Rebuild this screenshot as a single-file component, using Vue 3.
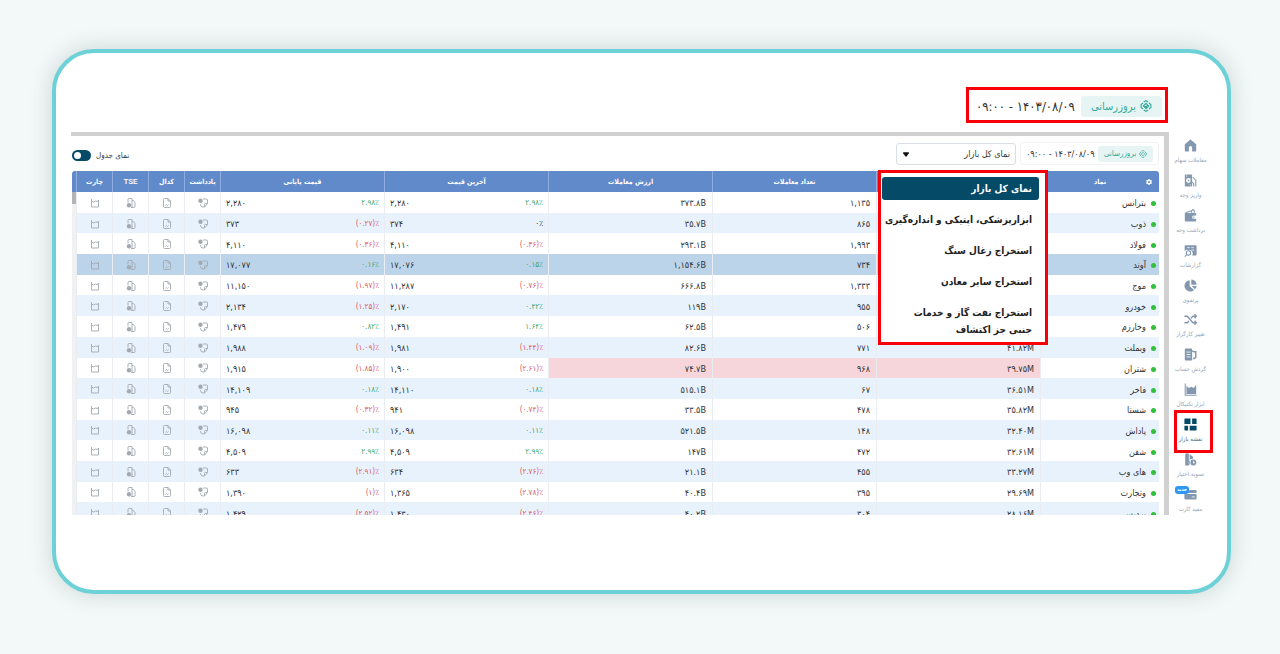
<script setup>
import { ref } from 'vue'

const tableView = ref(true)
const market = ref('نمای کل بازار')
const markets = [
  'نمای کل بازار',
  'ابزارپزشکی، اپتیکی و اندازه‌گیری',
  'استخراج زغال سنگ',
  'استخراج سایر معادن',
  'استخراج نفت گاز و خدمات\nجنبی جز اکتشاف',
]

const menu = [
  { icon: 'home', label: 'معاملات سهام' },
  { icon: 'deposit', label: 'واریز وجه' },
  { icon: 'wallet', label: 'برداشت وجه' },
  { icon: 'report', label: 'گزارشات' },
  { icon: 'pie', label: 'پرتفوی' },
  { icon: 'shuffle', label: 'تغییر کارگزار' },
  { icon: 'ledger', label: 'گردش حساب' },
  { icon: 'chart', label: 'ابزار تکنیکال' },
  { icon: 'grid', label: 'نقشه بازار', active: true },
  { icon: 'option', label: 'تسویه اختیار' },
  { icon: 'card', label: 'مفید کارت', badge: 'جدید' },
]

const rows = [
  ['بترانس', '', '۱,۱۳۵', '۳۷۳.۸B', '۲,۲۸۰', '۲.۹۸٪', '۲,۲۸۰', '۲.۹۸٪'],
  ['ذوب', '', '۸۶۵', '۳۵.۷B', '۳۷۴', '۰٪', '۳۷۳', '(۰.۲۷)٪'],
  ['فولاد', '', '۱,۹۹۳', '۲۹۳.۱B', '۴,۱۱۰', '(۰.۳۶)٪', '۴,۱۱۰', '(۰.۳۶)٪'],
  ['آوند', '', '۷۳۴', '۱,۱۵۴.۶B', '۱۷,۰۷۶', '۰.۱۵٪', '۱۷,۰۷۷', '۰.۱۶٪'],
  ['موج', '', '۱,۳۳۳', '۶۶۶.۸B', '۱۱,۲۸۷', '(۰.۷۶)٪', '۱۱,۱۵۰', '(۱.۹۷)٪'],
  ['خودرو', '', '۹۵۵', '۱۱۹B', '۲,۱۷۰', '۰.۴۲٪', '۲,۱۳۴', '(۱.۲۵)٪'],
  ['وخارزم', '', '۵۰۶', '۶۲.۵B', '۱,۴۹۱', '۱.۶۴٪', '۱,۴۷۹', '۰.۸۲٪'],
  ['وبملت', '۴۱.۸۲M', '۷۷۱', '۸۲.۶B', '۱,۹۸۱', '(۱.۴۴)٪', '۱,۹۸۸', '(۱.۰۹)٪'],
  ['شتران', '۳۹.۷۵M', '۹۶۸', '۷۴.۷B', '۱,۹۰۰', '(۲.۶۱)٪', '۱,۹۱۵', '(۱.۸۵)٪'],
  ['فاخر', '۳۶.۵۱M', '۶۷', '۵۱۵.۱B', '۱۴,۱۱۰', '۰.۱۸٪', '۱۴,۱۰۹', '۰.۱۸٪'],
  ['شستا', '۳۵.۸۲M', '۴۷۸', '۳۳.۵B', '۹۴۱', '(۰.۷۴)٪', '۹۴۵', '(۰.۳۲)٪'],
  ['پاداش', '۳۲.۴۰M', '۱۴۸', '۵۲۱.۵B', '۱۶,۰۹۸', '۰.۱۱٪', '۱۶,۰۹۸', '۰.۱۱٪'],
  ['شفن', '۳۲.۶۱M', '۴۷۲', '۱۴۷B', '۴,۵۰۹', '۲.۹۹٪', '۴,۵۰۹', '۲.۹۹٪'],
  ['های وب', '۳۳.۲۷M', '۴۵۵', '۲۱.۱B', '۶۳۴', '(۲.۷۶)٪', '۶۳۳', '(۲.۹۱)٪'],
  ['وتجارت', '۲۹.۶۹M', '۳۹۵', '۴۰.۴B', '۱,۳۶۵', '(۲.۷۸)٪', '۱,۳۹۰', '(۱)٪'],
  ['پردیس', '۲۸.۱۶M', '۳۰۴', '۴۰.۲B', '۱,۴۳۰', '(۲.۴۶)٪', '۱,۴۲۹', '(۲.۵۲)٪'],
]

const trend = (pct) => (pct.startsWith('(') ? 'down' : pct === '۰٪' ? 'flat' : 'up')
</script>

<template>
  <main class="page" dir="rtl">
    <section class="card">
      <header class="callout">
        <button class="refresh" type="button">
          <svg viewBox="0 0 16 16" aria-hidden="true">
            <path d="M5 2.6 8 1l3 1.6M11 13.4 8 15l-3-1.6M4 4 1.500 6v4L4 12M12 4l2.500 2v4L12 12M4.500 8 8 4.500 11.500 8 8 11.500zM6.500 8 8 9.500 10 7" />
          </svg>
          بروزرسانی
        </button>
        <time>۱۴۰۳/۰۸/۰۹ - ۰۹:۰۰</time>
      </header>

      <div class="body">
        <nav class="side">
          <a v-for="m in menu" :key="m.icon" href="#" :class="['item', { active: m.active }]">
            <svg viewBox="0 0 16 16" aria-hidden="true">
              <path v-if="m.icon === 'home'" d="M8 .5 1 6.500V14.500a1 1 0 0 0 1 1H6v-5a2 2 0 0 1 4 0v5h4a1 1 0 0 0 1-1v-8z" />
              <g v-else-if="m.icon === 'deposit'">
                <path fill-rule="evenodd" d="M2 .5h7a1 1 0 0 1 1 1v13a1 1 0 0 1-1 1H2a1 1 0 0 1-1-1v-13a1 1 0 0 1 1-1zm3.500 4.500a3 3 0 1 0 0 6 3 3 0 0 0 0-6z" />
                <path class="line" d="M4.500 7l2 2M11 4l3.500 4v7.500M8 8l4 4v3.500" />
                <path class="cut" d="M2.500 2.500h1.500M7 13.500h1.500" />
              </g>
              <g v-else-if="m.icon === 'wallet'">
                <path fill-rule="evenodd" d="M2 5h12a1 1 0 0 1 1 1v2h-3a2 2 0 0 0 0 4h3v2.500a1 1 0 0 1-1 1H2a1 1 0 0 1-1-1V5zM12 9.200a.8.8 0 1 0 0 1.600.8.8 0 0 0 0-1.600z" />
                <path class="line" d="M2 4.500 8 2.500l2 2M9 2.500l2-2 2 2-1 2" />
              </g>
              <g v-else-if="m.icon === 'report'">
                <path d="M2 1.500h12.500a1 1 0 0 1 1 1V13a1 1 0 0 1-1 1H10a4.200 4.200 0 0 0-4.500-6.500A4 4 0 0 0 .8 9V2.500a1 1 0 0 1 1-1z" />
                <path class="line" d="M3.500 13l-2.500 2.500" />
                <circle class="line" cx="5.500" cy="11" r="2.700" />
                <path class="cut" d="M4 4.500h3M9 4.500h3M9 7.500h3.500" />
              </g>
              <g v-else-if="m.icon === 'pie'">
                <path d="M7 1.500v7.500l5.500 4.500A7 7 0 1 1 7 1.500z" />
                <path d="M9 .5A7 7 0 0 1 15.500 7H9zM9.500 8.500h6a7 7 0 0 1-2 4z" />
              </g>
              <path v-else-if="m.icon === 'shuffle'" class="thick" d="M.5 4h3.500l7 8h4M.5 12h3.500l2-2.300M8.500 6.500 11 4h4M13 1.500 15.200 4 13 6.500M13 9.500l2.200 2.500L13 14.500" />
              <g v-else-if="m.icon === 'ledger'">
                <path d="M2 .5h7a1 1 0 0 1 1 1v13a1 1 0 0 1-1 1H2a1 1 0 0 1-1-1v-13a1 1 0 0 1 1-1z" />
                <path class="thick" d="M10 3.500l2 1h2.500v7l-2 1.500H11" />
                <path class="cut" d="M3 5h5M3 8h5M3 11h5" />
              </g>
              <g v-else-if="m.icon === 'chart'">
                <path class="line" d="M1.500.5v14.500H15.500" />
                <path d="M3 3.500 6 6l3-1.500L12 6l3-4v11.500H3z" />
              </g>
              <path v-else-if="m.icon === 'grid'" d="M1.500.5H8v7H.5v-6a1 1 0 0 1 1-1zM10 .5h4.500a1 1 0 0 1 1 1v6H10zM.5 9.500H5v6H1.500a1 1 0 0 1-1-1zM7 9.500h8.500v5a1 1 0 0 1-1 1H7z" />
              <g v-else-if="m.icon === 'option'">
                <path d="M1.500.5h4.500v15h-4.500zM7 1.500l4 3v2.500A4.800 4.800 0 0 0 7.500 15.500H7z" />
                <path fill-rule="evenodd" d="M11.500 8a3.700 3.700 0 1 1 0 7.400 3.700 3.700 0 0 1 0-7.400zm-.5 1.500v3h2.500v-1H12v-2z" />
              </g>
              <g v-else>
                <path d="M3 2.500h11a1.500 1.500 0 0 1 1.500 1.500v2H.5V5zM.5 7.500h15v5a1.500 1.500 0 0 1-1.500 1.500H2a1.500 1.500 0 0 1-1.500-1.500z" />
                <path class="cut" d="M9.500 11h4" />
              </g>
            </svg>
            <span>{{ m.label }}</span>
            <b v-if="m.badge" class="badge">{{ m.badge }}</b>
          </a>
        </nav>

        <div class="panel">
          <div class="toolbar">
            <div class="stamp">
              <button class="refresh" type="button">
                <svg viewBox="0 0 16 16" aria-hidden="true">
                  <path d="M5 2.6 8 1l3 1.6M11 13.4 8 15l-3-1.6M4 4 1.500 6v4L4 12M12 4l2.500 2v4L12 12M4.500 8 8 4.500 11.500 8 8 11.500z" />
                </svg>
                بروزرسانی
              </button>
              <time>۱۴۰۳/۰۸/۰۹ - ۰۹:۰۰</time>
            </div>
            <div class="picker">
              <select v-model="market" aria-label="بازار">
                <option v-for="m in markets" :key="m" :value="m">{{ m }}</option>
              </select>
              <svg viewBox="0 0 8 6" aria-hidden="true"><path d="M1 0h6a1 1 0 0 1 .7 1.500L4.700 5.500a1 1 0 0 1-1.400 0L.3 1.500A1 1 0 0 1 1 0z" /></svg>
            </div>
            <label class="switch">
              نمای جدول
              <input v-model="tableView" type="checkbox" role="switch" />
            </label>
          </div>

          <ul class="menu">
            <li v-for="m in markets" :key="m">
              <button type="button" :class="{ chosen: m === market }" @click="market = m">{{ m }}</button>
            </li>
          </ul>

          <div class="grid">
            <table>
              <colgroup>
                <col class="c-name" />
                <col class="c-wide" span="5" />
                <col class="c-icon" span="4" />
              </colgroup>
              <thead>
                <tr>
                  <th>
                    <svg class="gear" viewBox="0 0 12 12" aria-hidden="true">
                      <path fill-rule="evenodd" d="M4.800 0h2.400l.4 1.600 1.500.8 1.600-.5 1.200 2.100L10.800 5.200v1.600l1.100 1.200-1.200 2.100-1.600-.5-1.500.8L7.200 12H4.800l-.4-1.600-1.500-.8-1.600.5L.1 8l1.100-1.200V5.200L.1 4l1.200-2.100 1.600.5 1.500-.8zM6 3.900a2.100 2.100 0 1 0 0 4.200 2.100 2.100 0 0 0 0-4.200z" />
                    </svg>
                    نماد
                  </th>
                  <th></th>
                  <th>تعداد معاملات</th>
                  <th>ارزش معاملات</th>
                  <th>آخرین قیمت</th>
                  <th>قیمت پایانی</th>
                  <th>یادداشت</th>
                  <th>کدال</th>
                  <th class="latin">TSE</th>
                  <th>چارت</th>
                </tr>
              </thead>
              <tbody>
                <tr v-for="(r, i) in rows" :key="r[0]" :class="{ picked: i === 3, flash: i === 8 }">
                  <td class="name"><i></i>{{ r[0] }}</td>
                  <td class="num">{{ r[1] }}</td>
                  <td class="num">{{ r[2] }}</td>
                  <td class="num">{{ r[3] }}</td>
                  <td><div class="price"><span>{{ r[4] }}</span><span :class="trend(r[5])">{{ r[5] }}</span></div></td>
                  <td><div class="price"><span>{{ r[6] }}</span><span :class="trend(r[7])">{{ r[7] }}</span></div></td>
                  <td class="ico">
                    <svg viewBox="0 0 10 10"><path d="M5 1h3.500a1 1 0 0 1 1 1v3.500L6.500 9H5a2.500 2.500 0 0 1-2.500-2.500V6M9.500 5.500H7.500a1 1 0 0 0-1 1V9" /><circle class="dot" cx="2.500" cy="2.800" r="2.200" /></svg>
                  </td>
                  <td class="ico">
                    <svg viewBox="0 0 10 10"><path d="M2.500.5H6L8.500 3v5.500a1 1 0 0 1-1 1h-5a1 1 0 0 1-1-1v-7a1 1 0 0 1 1-1zM6 .5V3h2.500M3.500 7.500l1-1 1 1 1-1" /></svg>
                  </td>
                  <td class="ico">
                    <svg viewBox="0 0 10 10"><path d="M2 4.500v-3a1 1 0 0 1 1-1h3V9.500H5M6 2.500h1.500l1.500 2v4a1 1 0 0 1-1 1H6" /><circle class="dot" cx="3" cy="7.300" r="2.200" /></svg>
                  </td>
                  <td class="ico">
                    <svg viewBox="0 0 10 10"><path d="M1.500 1v8h7v-7L7.500 3.500 5.500 3 3.500 4 1.500 3" /></svg>
                  </td>
                </tr>
              </tbody>
            </table>
            <div class="track"><span></span></div>
          </div>
        </div>
      </div>
    </section>
  </main>
</template>

<style>
body {
  background: #f3f8f8;
}
</style>

<style scoped>
* {
  box-sizing: border-box;
}
.page {
  min-height: 100vh;
  padding: 49px 49px 60px 52px;
  font-family: 'DejaVu Sans Condensed', 'DejaVu Sans', sans-serif;
  font-size: 8px;
  color: #333;
}
button,
select,
input {
  font: inherit;
  color: inherit;
  margin: 0;
}
.card {
  min-height: 545px;
  padding: 34px 15px 0;
  background: #fff;
  border: 4px solid #6dd2d7;
  border-radius: 42px;
  box-shadow: 0 0 22px rgba(60, 90, 90, 0.22);
}
.callout {
  display: flex;
  align-items: center;
  justify-content: space-between;
  width: 202px;
  height: 36px;
  margin: 0 44px 9px 0;
  padding: 4px 3px 2px 7px;
  border: 3px solid #f90009;
  font-size: 13px;
}
.refresh {
  display: flex;
  align-items: center;
  justify-content: center;
  gap: 4px;
  border: 0;
  padding: 0;
  border-radius: 3px;
  background: #e6f5f4;
  color: #35a99c;
  white-space: nowrap;
}
.refresh svg {
  fill: none;
  stroke: #35a99c;
  stroke-width: 1.5;
}
.callout .refresh {
  width: 81px;
  height: 21px;
  font-size: 11px;
}
.callout svg {
  width: 12px;
  height: 12px;
}
.body {
  display: flex;
}
.side {
  width: 43px;
  flex: none;
  padding-top: 7px;
  display: flex;
  flex-direction: column;
  justify-content: space-between;
}
.item {
  position: relative;
  display: flex;
  flex-direction: column;
  align-items: center;
  gap: 2px;
  color: #93a3b5;
  font-size: 6px;
  line-height: 12px;
  text-decoration: none;
  white-space: nowrap;
}
.item svg {
  width: 13px;
  height: 13px;
  fill: #8398ae;
}
.item .line,
.item .thick {
  fill: none;
  stroke: #8398ae;
  stroke-width: 1.3;
}
.item .thick {
  stroke-width: 1.8;
}
.item .cut {
  fill: none;
  stroke: #fff;
}
.item.active {
  color: #40708a;
}
.item.active svg {
  fill: #054a66;
}
.item.active::after {
  content: '';
  position: absolute;
  inset: -8px -1px -8px 5px;
  border: 3px solid #f90009;
}
.badge {
  position: absolute;
  top: -2px;
  left: 6px;
  width: 14px;
  height: 8px;
  border-radius: 3px;
  background: #2e96f3;
  color: #fff;
  font-size: 5px;
  line-height: 7px;
  text-align: center;
}
.panel {
  position: relative;
  flex: 1;
  min-width: 0;
  border-top: 4px solid #d1d1d1;
  border-right: 5px solid #d1d1d1;
}
.toolbar {
  display: flex;
  align-items: center;
  gap: 4px;
  height: 35px;
  padding: 0 5px 0 1px;
}
.stamp {
  display: flex;
  align-items: center;
  justify-content: space-between;
  width: 139px;
  height: 23px;
  padding: 0 5px;
  border: 1px solid #f0f2f4;
  border-radius: 3px;
  font-size: 9px;
}
.stamp .refresh {
  width: 55px;
  height: 16px;
  gap: 3px;
  font-size: 8px;
}
.stamp svg {
  width: 8px;
  height: 8px;
}
.picker {
  position: relative;
  width: 120px;
}
.picker select {
  appearance: none;
  display: block;
  width: 100%;
  height: 22px;
  padding: 0 5px;
  border: 1px solid #d9dfe5;
  border-radius: 3px;
  background: #fff;
  font-size: 9px;
}
.picker svg {
  position: absolute;
  left: 7px;
  top: 9px;
  width: 6px;
  height: 5px;
  fill: #111;
}
.switch {
  display: flex;
  align-items: center;
  gap: 5px;
  margin-right: auto;
  margin-top: 4px;
}
.switch input {
  appearance: none;
  width: 19px;
  height: 11px;
  padding: 2px;
  border-radius: 6px;
  background: #054a66;
  direction: ltr;
}
.switch input::before {
  content: '';
  display: block;
  width: 7px;
  height: 7px;
  border-radius: 50%;
  background: #fff;
}
.menu {
  position: absolute;
  z-index: 2;
  top: 34px;
  right: 116px;
  width: 170px;
  margin: 0;
  padding: 4px 6px 1px 1px;
  border: 3px solid #f90009;
  background: #fff;
  list-style: none;
  color: #222;
  font-size: 10px;
  font-weight: bold;
}
.menu button {
  display: block;
  width: 100%;
  min-height: 23px;
  margin-bottom: 8px;
  padding: 3px 7px 3px 0;
  border: 0;
  border-radius: 3px;
  background: none;
  line-height: 17px;
  text-align: right;
  white-space: pre-line;
}
.menu li:last-child button {
  margin: 0;
}
.menu .chosen {
  background: #054a66;
  color: #fff;
}
.grid {
  display: flex;
  height: 344px;
  margin: 0 5px 0 1px;
  overflow: hidden;
}
table {
  flex: 1;
  height: 352px;
  table-layout: fixed;
  border-spacing: 0;
}
.c-name {
  width: 119px;
}
.c-wide {
  width: 164px;
}
.c-icon {
  width: 36px;
}
th {
  position: relative;
  height: 21px;
  padding: 0;
  background: #608aca;
  border-left: 1px solid #8fade0;
  color: #fff;
  font-size: 7px;
  font-weight: bold;
  white-space: nowrap;
}
th:first-child {
  border-top-right-radius: 3px;
}
th.latin {
  font-family: Roboto, sans-serif;
  font-size: 8px;
  font-weight: 500;
}
.gear {
  position: absolute;
  right: 7px;
  top: 8px;
  width: 6px;
  height: 6px;
  fill: #fff;
}
td {
  padding: 2px 5px 0;
  border-left: 1px solid #e9edf2;
  font-size: 9px;
  line-height: 16px;
  white-space: nowrap;
}
tbody tr:nth-child(even) {
  background: #e8f2fd;
}
tbody tr.picked {
  background: #bcd4ea;
}
.flash .num {
  background: #f6d6db;
}
.num {
  direction: ltr;
  text-align: right;
}
.name {
  padding: 2px 3px 0;
}
.name i {
  display: inline-block;
  width: 5px;
  height: 5px;
  margin-left: 5px;
  border-radius: 50%;
  background: #30c03a;
}
.price {
  display: flex;
  justify-content: space-between;
  direction: ltr;
}
.up,
.down,
.flat {
  font-size: 8px;
}
.up {
  color: #4aa564;
}
.down {
  color: #dc5a66;
}
.ico {
  padding: 0;
  text-align: center;
}
.ico svg {
  width: 10px;
  height: 10px;
  vertical-align: middle;
  fill: none;
  stroke: #a3a9b0;
  stroke-width: 0.9;
}
.ico .dot {
  fill: #a3a9b0;
  stroke: none;
}
.track {
  flex: none;
  width: 4px;
  padding-top: 21px;
  background: linear-gradient(#608aca 21px, #f1f1f1 21px);
  border-top-left-radius: 3px;
}
.track span {
  display: block;
  height: 12px;
  background: #b4b4b4;
}
</style>
